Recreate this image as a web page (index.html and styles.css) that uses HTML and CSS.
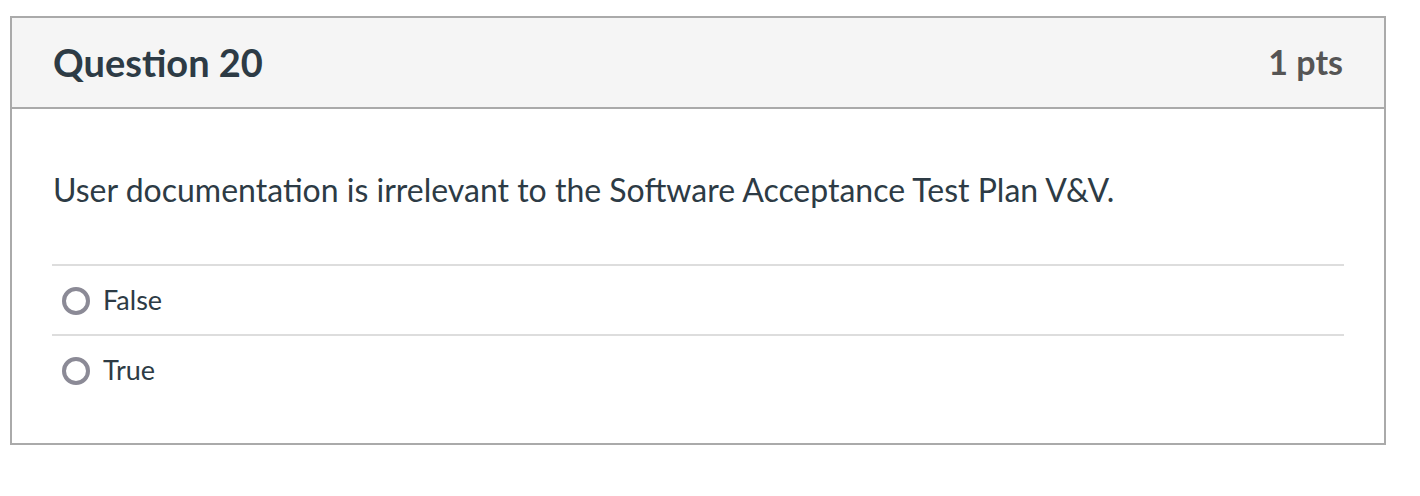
FILE: index.html
```html
<!DOCTYPE html>
<html>
<head>
<meta charset="utf-8">
<link rel="stylesheet" href="styles.css">
</head>
<body>
<div class="question">
  <div class="header">
    <h2 class="title">Question 20</h2>
    <div class="points">1 pts</div>
  </div>
  <div class="content">
    <p class="text">User documentation is irrelevant to the Software Acceptance Test Plan V&amp;V.</p>
    <div class="answers">
      <label class="answer"><span class="radio"></span><span class="label">False</span></label>
      <label class="answer"><span class="radio"></span><span class="label">True</span></label>
    </div>
  </div>
</div>
</body>
</html>
```
FILE: styles.css
```css
html, body {
  margin: 0;
  padding: 0;
  background: #fff;
}
body {
  padding: 16px 0 0 10px;
  font-family: Lato, "Liberation Sans", sans-serif;
  color: #2d3b45;
}
.question {
  width: 1376px;
  height: 429px;
  box-sizing: border-box;
  border: 2px solid #aaaaaa;
}
.header {
  height: 91px;
  box-sizing: border-box;
  background: #f5f5f5;
  border-bottom: 2px solid #aaaaaa;
  display: flex;
  align-items: center;
  justify-content: space-between;
  padding: 0 41px 2px 41px;
}
.title {
  margin: 0;
  font-size: 38px;
  font-weight: 700;
  color: #2d3b45;
}
.points {
  font-size: 34px;
  font-weight: 700;
  color: #555555;
}
.content {
  padding: 0 40px;
}
.text {
  margin: 0;
  padding: 61px 0 0 1px;
  height: 155px;
  box-sizing: border-box;
  font-size: 32px;
  line-height: 40px;
}
.answers {
  display: flex;
  flex-direction: column;
}
.answer {
  display: flex;
  align-items: center;
  height: 70px;
  box-sizing: border-box;
  border-top: 2px solid #dddddd;
  padding-left: 10px;
  gap: 13px;
  font-size: 27px;
}
.radio {
  width: 28px;
  height: 28px;
  box-sizing: border-box;
  border: 4px solid #8b8a96;
  border-radius: 50%;
  flex: none;
  margin-top: 2px;
}
.label {
  line-height: 30px;
}
```
